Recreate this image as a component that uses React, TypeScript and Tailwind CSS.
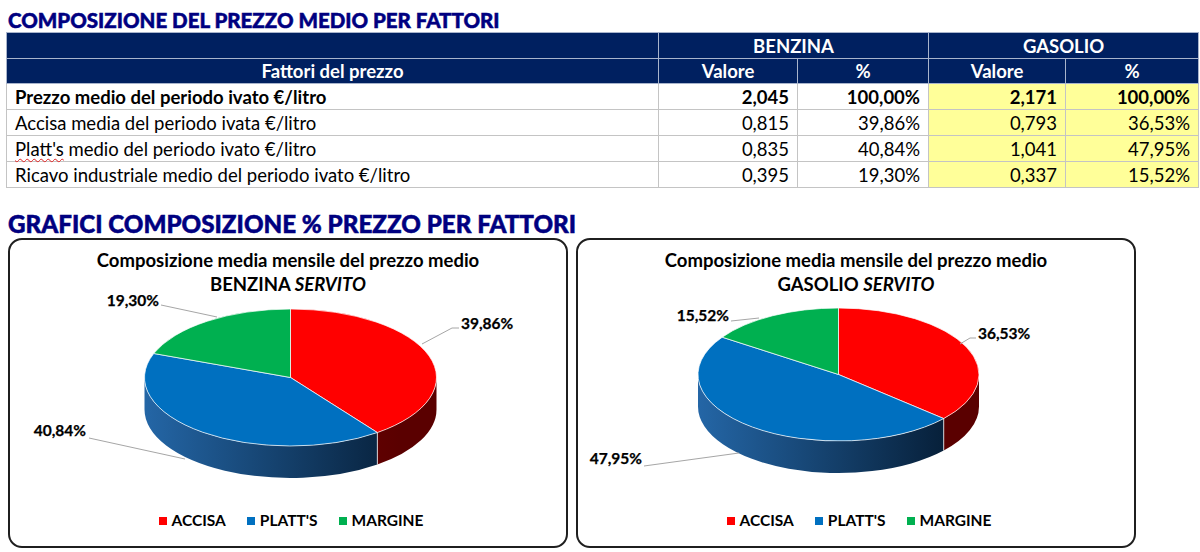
import React from "react";

type Slice = { name: string; value: number; top: string; side: [string, string] };
type Label = { text: string; x: number; y: number; anchor: "start" | "end"; line: [number, number][] };
type Pie = {
  fuel: string;
  cx: number;
  cy: number;
  rx: number;
  ry: number;
  depth: number;
  slices: Slice[];
  labels: Label[];
};

const RED: Slice = { name: "ACCISA", value: 0, top: "#ff0000", side: ["#8c0000", "#5a0000"] };
const BLUE: Slice = { name: "PLATT'S", value: 0, top: "#0070c0", side: ["#2466a6", "#07203a"] };
const GREEN: Slice = { name: "MARGINE", value: 0, top: "#00b050", side: ["#007a38", "#004f24"] };

const rows = [
  { label: "Prezzo medio del periodo ivato €/litro", b: "2,045", bp: "100,00%", g: "2,171", gp: "100,00%", bold: true },
  { label: "Accisa media del periodo ivata €/litro", b: "0,815", bp: "39,86%", g: "0,793", gp: "36,53%" },
  { label: "Platt's medio del periodo ivato €/litro", b: "0,835", bp: "40,84%", g: "1,041", gp: "47,95%", wavy: true },
  { label: "Ricavo industriale medio del periodo ivato €/litro", b: "0,395", bp: "19,30%", g: "0,337", gp: "15,52%" },
];

const pies: Pie[] = [
  {
    fuel: "BENZINA",
    cx: 280.5,
    cy: 85.5,
    rx: 146,
    ry: 68.5,
    depth: 32,
    slices: [
      { ...RED, value: 39.86 },
      { ...BLUE, value: 40.84 },
      { ...GREEN, value: 19.3 },
    ],
    labels: [
      { text: "19,30%", x: 149, y: 14, anchor: "end", line: [[151, 13], [207, 25]] },
      { text: "39,86%", x: 451, y: 37, anchor: "start", line: [[449, 36], [442, 36], [412, 52]] },
      { text: "40,84%", x: 76, y: 144, anchor: "end", line: [[79, 146], [175, 167]] },
    ],
  },
  {
    fuel: "GASOLIO",
    cx: 260.5,
    cy: 82.5,
    rx: 140.5,
    ry: 66.5,
    depth: 32,
    slices: [
      { ...RED, value: 36.53 },
      { ...BLUE, value: 47.95 },
      { ...GREEN, value: 15.52 },
    ],
    labels: [
      { text: "15,52%", x: 151, y: 29, anchor: "end", line: [[153, 29], [181, 26]] },
      { text: "36,53%", x: 400, y: 47, anchor: "start", line: [[398, 46], [392, 46], [382, 52]] },
      { text: "47,95%", x: 64, y: 172, anchor: "end", line: [[66, 174], [161, 161]] },
    ],
  },
];

// angle in degrees, 0 = twelve o'clock, clockwise like Excel
function pt(p: Pie, deg: number, dy = 0) {
  const r = (deg * Math.PI) / 180;
  return `${(p.cx + p.rx * Math.sin(r)).toFixed(2)} ${(p.cy - p.ry * Math.cos(r) + dy).toFixed(2)}`;
}

function PieChart({ pie, idx }: { pie: Pie; idx: number }) {
  const total = pie.slices.reduce((s, x) => s + x.value, 0);
  let acc = 0;
  const arcs = pie.slices.map((s) => {
    const a = (acc / total) * 360;
    acc += s.value;
    const b = (acc / total) * 360;
    return { s, a, b };
  });

  return (
    <svg width={556} height={216} className="block overflow-visible">
      <defs>
        {arcs.map(({ s }, i) => (
          <linearGradient
            key={i}
            id={`side-${idx}-${i}`}
            gradientUnits="userSpaceOnUse"
            x1={pie.cx - pie.rx}
            y1={0}
            x2={pie.cx + pie.rx * 0.75}
            y2={0}
          >
            <stop offset="0%" stopColor={s.side[0]} />
            <stop offset="100%" stopColor={s.side[1]} />
          </linearGradient>
        ))}
      </defs>

      {/* visible outer walls (front half) */}
      {arcs.map(({ a, b }, i) => {
        const s = Math.max(a, 90);
        const e = Math.min(b, 270);
        if (s >= e) return null;
        const d = `M ${pt(pie, s)} A ${pie.rx} ${pie.ry} 0 0 1 ${pt(pie, e)} L ${pt(pie, e, pie.depth)} A ${pie.rx} ${pie.ry} 0 0 0 ${pt(pie, s, pie.depth)} Z`;
        return <path key={i} d={d} fill={`url(#side-${idx}-${i})`} />;
      })}
      {arcs.map(({ a }, i) =>
        a > 90 && a < 270 ? (
          <path key={`edge-${i}`} d={`M ${pt(pie, a)} L ${pt(pie, a, pie.depth)}`} stroke="#ffffff" strokeOpacity={0.75} strokeWidth={1} />
        ) : null,
      )}

      {/* top face */}
      {arcs.map(({ s, a, b }, i) => {
        const large = b - a > 180 ? 1 : 0;
        const d = `M ${pie.cx} ${pie.cy} L ${pt(pie, a)} A ${pie.rx} ${pie.ry} 0 ${large} 1 ${pt(pie, b)} Z`;
        return <path key={i} d={d} fill={s.top} stroke="#ffffff" strokeOpacity={0.7} strokeWidth={1} strokeLinejoin="round" />;
      })}

      {pie.labels.map((l, i) => (
        <g key={i}>
          <polyline points={l.line.map((p) => p.join(",")).join(" ")} fill="none" stroke="#a6a6a6" strokeWidth={1} />
          <text
            x={l.x}
            y={l.y}
            textAnchor={l.anchor}
            fontFamily="Lato, sans-serif"
            fontWeight={700}
            fontSize={15.5}
            fill="#000"
            stroke="#000"
            strokeWidth={0.25}
          >
            {l.text}
          </text>
        </g>
      ))}
    </svg>
  );
}

function ChartCard({ pie, idx }: { pie: Pie; idx: number }) {
  return (
    <div className="w-[560px] h-[310px] border-2 border-[#1f1f1f] rounded-[14px] flex flex-col">
      <div className="h-[52px] pt-[8px] text-center text-[18.5px] leading-[24px] font-bold text-black">
        <div>Composizione media mensile del prezzo medio</div>
        <div>
          {pie.fuel} <span className="italic">SERVITO</span>
        </div>
      </div>
      <PieChart pie={pie} idx={idx} />
      <div className="h-[26px] flex items-center justify-center gap-[21px] pl-[6px] text-[15.5px] font-bold text-black">
        {pie.slices.map((s) => (
          <div key={s.name} className="flex items-center gap-[5px]">
            <span className="w-[8px] h-[8px] inline-block" style={{ backgroundColor: s.top }} />
            <span>{s.name}</span>
          </div>
        ))}
      </div>
    </div>
  );
}

export default function App() {
  const head = "border border-[#a8b4cc] text-white font-bold text-center";
  const cell = "border border-[#c4c4c4] text-right pr-[8px]";
  return (
    <div className="w-[1200px] h-[552px] bg-white overflow-hidden font-['Lato',sans-serif] text-black">
      <h1 className="h-[32px] pt-[8px] pl-[8px] text-[20.5px] leading-[24px] font-black text-[#000080] [-webkit-text-stroke:0.5px_#000080]">
        COMPOSIZIONE DEL PREZZO MEDIO PER FATTORI
      </h1>

      <table className="ml-[6px] w-[1192px] table-fixed border-collapse text-[18.5px] leading-[22px]">
        <colgroup>
          <col className="w-[652px]" />
          <col className="w-[139px]" />
          <col className="w-[131px]" />
          <col className="w-[137px]" />
          <col className="w-[133px]" />
        </colgroup>
        <thead className="bg-[#002060]">
          <tr className="h-[26px]">
            <th className={head}></th>
            <th className={head} colSpan={2}>BENZINA</th>
            <th className={head} colSpan={2}>GASOLIO</th>
          </tr>
          <tr className="h-[25px]">
            <th className={head}>Fattori del prezzo</th>
            <th className={head}>Valore</th>
            <th className={head}>%</th>
            <th className={head}>Valore</th>
            <th className={head}>%</th>
          </tr>
        </thead>
        <tbody>
          {rows.map((r) => (
            <tr key={r.label} className={`h-[26px] ${r.bold ? "font-bold" : ""}`}>
              <td className="border border-[#c4c4c4] pl-[8px] text-left">
                {r.wavy ? (
                  <>
                    <span className="underline decoration-wavy decoration-[#e02020] decoration-1 underline-offset-2">Platt's</span>
                    {" medio del periodo ivato €/litro"}
                  </>
                ) : (
                  r.label
                )}
              </td>
              <td className={cell}>{r.b}</td>
              <td className={cell}>{r.bp}</td>
              <td className={`${cell} bg-[#ffff99]`}>{r.g}</td>
              <td className={`${cell} bg-[#ffff99]`}>{r.gp}</td>
            </tr>
          ))}
        </tbody>
      </table>

      <h2 className="mt-[23px] pl-[8px] text-[24.2px] leading-[26px] font-black text-[#000080] [-webkit-text-stroke:0.5px_#000080]">
        GRAFICI COMPOSIZIONE % PREZZO PER FATTORI
      </h2>

      <div className="mt-[1px] pl-[8px] flex gap-[8px]">
        {pies.map((p, i) => (
          <ChartCard key={p.fuel} pie={p} idx={i} />
        ))}
      </div>
    </div>
  );
}
